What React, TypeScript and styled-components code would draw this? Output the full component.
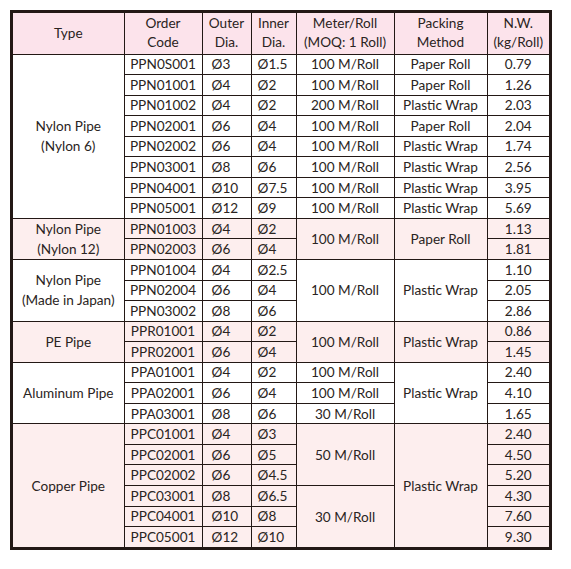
import React from "react";
import styled, { createGlobalStyle } from "styled-components";

const Global = createGlobalStyle`
  html, body { margin: 0; padding: 0; background: #ffffff; }
  body { padding: 10px; font-family: "Lato", "Liberation Sans", sans-serif; }
`;

const Frame = styled.div`
  width: 536px;
  border: 3px solid #231815;
  background: #ffffff;
`;

const Table = styled.table`
  width: 536px;
  border-collapse: collapse;
  border-style: hidden;
  table-layout: fixed;
  color: #2a2422;
  font-size: 13.6px;
`;

const HeadRow = styled.tr`
  height: 41px;
  background: #fce3eb;
`;

const BodyRow = styled.tr<{ $pink: boolean }>`
  height: 20.55px;
  background: ${(p) => (p.$pink ? "#fdeeee" : "#ffffff")};
`;

const Th = styled.th`
  border: 1px solid #231815;
  font-weight: 400;
  line-height: 19px;
  text-align: center;
  padding: 0;
`;

const Td = styled.td<{ $align?: "left" | "center"; $pad?: number }>`
  border: 1px solid #231815;
  padding: 0 0 0 ${(p) => p.$pad ?? 0}px;
  text-align: ${(p) => p.$align ?? "center"};
  line-height: 18px;
  white-space: nowrap;
  vertical-align: middle;
`;

const TypeCell = styled(Td)`
  line-height: 20px;
  white-space: normal;
`;

type Span = { text: string; span: number };
type Row = {
  code: string;
  outer: string;
  inner: string;
  meter?: Span;
  pack?: Span;
  nw: string;
};
type Group = { type: string[]; pink: boolean; rows: Row[] };

const r = (
  code: string,
  outer: string,
  inner: string,
  nw: string,
  meter?: Span,
  pack?: Span
): Row => ({ code, outer, inner, nw, meter, pack });

const m = (text: string, span = 1): Span => ({ text, span });

const groups: Group[] = [
  {
    type: ["Nylon Pipe", "(Nylon 6)"],
    pink: false,
    rows: [
      r("PPN0S001", "Ø3", "Ø1.5", "0.79", m("100 M/Roll"), m("Paper Roll")),
      r("PPN01001", "Ø4", "Ø2", "1.26", m("100 M/Roll"), m("Paper Roll")),
      r("PPN01002", "Ø4", "Ø2", "2.03", m("200 M/Roll"), m("Plastic Wrap")),
      r("PPN02001", "Ø6", "Ø4", "2.04", m("100 M/Roll"), m("Paper Roll")),
      r("PPN02002", "Ø6", "Ø4", "1.74", m("100 M/Roll"), m("Plastic Wrap")),
      r("PPN03001", "Ø8", "Ø6", "2.56", m("100 M/Roll"), m("Plastic Wrap")),
      r("PPN04001", "Ø10", "Ø7.5", "3.95", m("100 M/Roll"), m("Plastic Wrap")),
      r("PPN05001", "Ø12", "Ø9", "5.69", m("100 M/Roll"), m("Plastic Wrap")),
    ],
  },
  {
    type: ["Nylon Pipe", "(Nylon 12)"],
    pink: true,
    rows: [
      r("PPN01003", "Ø4", "Ø2", "1.13", m("100 M/Roll", 2), m("Paper Roll", 2)),
      r("PPN02003", "Ø6", "Ø4", "1.81"),
    ],
  },
  {
    type: ["Nylon Pipe", "(Made in Japan)"],
    pink: false,
    rows: [
      r("PPN01004", "Ø4", "Ø2.5", "1.10", m("100 M/Roll", 3), m("Plastic Wrap", 3)),
      r("PPN02004", "Ø6", "Ø4", "2.05"),
      r("PPN03002", "Ø8", "Ø6", "2.86"),
    ],
  },
  {
    type: ["PE Pipe"],
    pink: true,
    rows: [
      r("PPR01001", "Ø4", "Ø2", "0.86", m("100 M/Roll", 2), m("Plastic Wrap", 2)),
      r("PPR02001", "Ø6", "Ø4", "1.45"),
    ],
  },
  {
    type: ["Aluminum Pipe"],
    pink: false,
    rows: [
      r("PPA01001", "Ø4", "Ø2", "2.40", m("100 M/Roll"), m("Plastic Wrap", 3)),
      r("PPA02001", "Ø6", "Ø4", "4.10", m("100 M/Roll")),
      r("PPA03001", "Ø8", "Ø6", "1.65", m("30 M/Roll")),
    ],
  },
  {
    type: ["Copper Pipe"],
    pink: true,
    rows: [
      r("PPC01001", "Ø4", "Ø3", "2.40", m("50 M/Roll", 3), m("Plastic Wrap", 6)),
      r("PPC02001", "Ø6", "Ø5", "4.50"),
      r("PPC02002", "Ø6", "Ø4.5", "5.20"),
      r("PPC03001", "Ø8", "Ø6.5", "4.30", m("30 M/Roll", 3)),
      r("PPC04001", "Ø10", "Ø8", "7.60"),
      r("PPC05001", "Ø12", "Ø10", "9.30"),
    ],
  },
];

const widths = [111, 78, 49, 45, 98, 93, 62];

export default function App() {
  return (
    <>
      <Global />
      <Frame>
        <Table>
          <colgroup>
            {widths.map((w, i) => (
              <col key={i} style={{ width: w }} />
            ))}
          </colgroup>
          <thead>
            <HeadRow>
              <Th>Type</Th>
              <Th>
                Order
                <br />
                Code
              </Th>
              <Th>
                Outer
                <br />
                Dia.
              </Th>
              <Th>
                Inner
                <br />
                Dia.
              </Th>
              <Th>
                Meter/Roll
                <br />
                (MOQ: 1 Roll)
              </Th>
              <Th>
                Packing
                <br />
                Method
              </Th>
              <Th>
                N.W.
                <br />
                (kg/Roll)
              </Th>
            </HeadRow>
          </thead>
          <tbody>
            {groups.map((g) =>
              g.rows.map((row, i) => (
                <BodyRow key={row.code} $pink={g.pink}>
                  {i === 0 && (
                    <TypeCell rowSpan={g.rows.length}>
                      {g.type.map((t, k) => (
                        <React.Fragment key={k}>
                          {k > 0 && <br />}
                          {t}
                        </React.Fragment>
                      ))}
                    </TypeCell>
                  )}
                  <Td>{row.code}</Td>
                  <Td $align="left" $pad={9}>
                    {row.outer}
                  </Td>
                  <Td $align="left" $pad={6}>
                    {row.inner}
                  </Td>
                  {row.meter && <Td rowSpan={row.meter.span}>{row.meter.text}</Td>}
                  {row.pack && <Td rowSpan={row.pack.span}>{row.pack.text}</Td>}
                  <Td>{row.nw}</Td>
                </BodyRow>
              ))
            )}
          </tbody>
        </Table>
      </Frame>
    </>
  );
}
